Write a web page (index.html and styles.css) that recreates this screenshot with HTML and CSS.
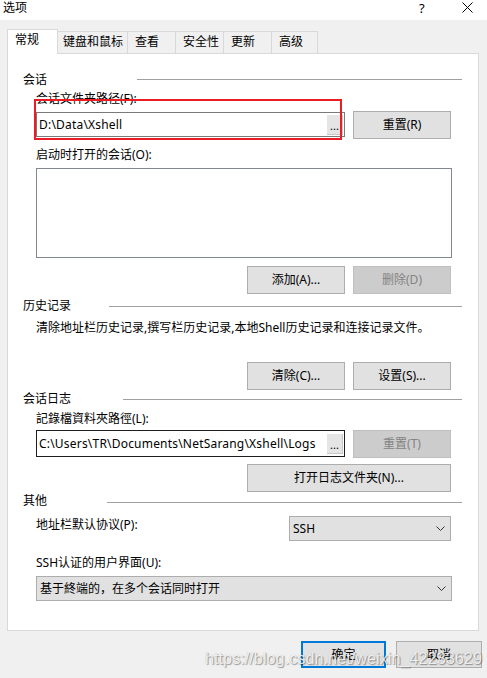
FILE: index.html
```html
<!DOCTYPE html>
<html lang="zh-CN">
<head>
<meta charset="utf-8">
<title>选项</title>
<link rel="stylesheet" href="styles.css">
</head>
<body>
<div class="window">
  <div class="titlebar">
    <span class="title">选项</span>
    <span class="help">?</span>
    <span class="close"><svg width="11" height="11" viewBox="0 0 11 11"><path d="M0.5 0.5 L10.5 10.5 M10.5 0.5 L0.5 10.5" stroke="#000" stroke-width="1" fill="none"/></svg></span>
  </div>
  <div class="dialog">
    <div class="tabs">
      <div class="tab tab-sel tab-general">常规</div>
      <div class="tab tab-keys">键盘和鼠标</div>
      <div class="tab tab-view">查看</div>
      <div class="tab tab-sec">安全性</div>
      <div class="tab tab-upd">更新</div>
      <div class="tab tab-adv">高级</div>
    </div>
    <div class="panel">
      <div class="sec-head head-session"><span>会话</span><i class="rule"></i></div>
      <div class="label lbl-path">会话文件夹路径(F):</div>
      <div class="row row-path">
        <div class="input input-path"><span class="val">D:\Data\Xshell</span><span class="browse">...</span></div>
        <button class="btn">重置(R)</button>
      </div>
      <div class="label lbl-start">启动时打开的会话(O):</div>
      <div class="listbox"></div>
      <div class="row row-btns row-add">
        <button class="btn">添加(A)...</button>
        <button class="btn disabled">删除(D)</button>
      </div>
      <div class="sec-head head-history"><span>历史记录</span><i class="rule"></i></div>
      <div class="label desc">清除地址栏历史记录,撰写栏历史记录,本地Shell历史记录和连接记录文件。</div>
      <div class="row row-btns row-clear">
        <button class="btn">清除(C)...</button>
        <button class="btn">设置(S)...</button>
      </div>
      <div class="sec-head head-log"><span>会话日志</span><i class="rule"></i></div>
      <div class="label lbl-log">記錄檔資料夾路徑(L):</div>
      <div class="row row-log">
        <div class="input input-log"><span class="val">C:\Users\TR\Documents\NetSarang\Xshell\Logs</span><span class="browse">...</span></div>
        <button class="btn disabled">重置(T)</button>
      </div>
      <div class="row row-btns row-open">
        <button class="btn btn-wide">打开日志文件夹(N)...</button>
      </div>
      <div class="sec-head head-other"><span>其他</span><i class="rule"></i></div>
      <div class="row row-proto">
        <div class="label">地址栏默认协议(P):</div>
        <div class="combo combo-proto"><span>SSH</span><svg width="9" height="5" viewBox="0 0 9 5"><path d="M0.5 0.5 L4.5 4.5 L8.5 0.5" stroke="#333" stroke-width="1" fill="none"/></svg></div>
      </div>
      <div class="label lbl-ui">SSH认证的用户界面(U):</div>
      <div class="combo combo-ui"><span>基于終端的，在多个会话同时打开</span><svg width="9" height="5" viewBox="0 0 9 5"><path d="M0.5 0.5 L4.5 4.5 L8.5 0.5" stroke="#333" stroke-width="1" fill="none"/></svg></div>
    </div>
    <div class="footer">
      <button class="btn btn-default">确定</button>
      <button class="btn btn-cancel">取消</button>
    </div>
  </div>
  <div class="annot"></div>
  <div class="watermark">https://blog.csdn.net/weixin_42233629</div>
</div>
</body>
</html>
```
FILE: styles.css
```css
* { box-sizing: border-box; }
html, body { margin: 0; padding: 0; }
body {
  width: 487px;
  height: 678px;
  background: #f0f0f0;
  font-family: "Noto Sans", "Noto Sans CJK SC", sans-serif;
  font-size: 12px;
  color: #000;
  overflow: hidden;
}
.window { position: relative; width: 487px; height: 678px; }
.titlebar {
  height: 20px;
  background: #fff;
  display: flex;
  align-items: flex-start;
  position: relative;
}
.title { margin-left: 3px; line-height: 15px; }
.help { position: absolute; left: 419px; top: 0; line-height: 16px; font-size: 13px; }
.close { position: absolute; left: 462px; top: 2px; width: 11px; height: 11px; }
.close svg { display: block; }

.dialog { padding: 9px 8px 0 7px; }
.tabs { display: flex; align-items: flex-end; height: 24px; }
.tab {
  height: 22px;
  border: 1px solid #d9d9d9;
  border-bottom: none;
  background: #f0f0f0;
  padding: 2px 0 0 6px;
  line-height: 16px;
  margin-left: -1px;
  white-space: nowrap;
}
.tab-sel {
  height: 25px;
  background: #fff;
  margin-left: 0;
  margin-bottom: -1px;
  position: relative;
  z-index: 1;
  padding-left: 7px;
}
.tab-general { width: 51px; }
.tab-keys { width: 71px; padding-left: 5px; }
.tab-view { width: 49px; padding-left: 7px; }
.tab-sec { width: 49px; padding-left: 7px; }
.tab-upd { width: 49px; padding-left: 7px; }
.tab-adv { width: 47px; padding-left: 7px; }

.panel {
  height: 578px;
  background: #fff;
  border: 1px solid #d9d9d9;
  padding: 0 16px 0 15px;
  display: flex;
  flex-direction: column;
}
.sec-head { display: flex; align-items: center; height: 16px; line-height: 16px; }
.sec-head .rule { flex: 1; height: 1px; background: #a0a0a0; }
.head-session { margin-top: 18px; }
.head-session .rule { margin-left: 90px; margin-top: -2px; }
.head-history { margin-top: 4px; }
.head-history .rule { margin-left: 38px; }
.head-log { margin-top: 1px; }
.head-log .rule { margin-left: 52px; }
.head-other { margin-top: 1px; }
.head-other .rule { margin-left: 60px; margin-top: 2px; }

.label { line-height: 16px; margin-left: 13px; white-space: nowrap; }
.lbl-path { margin-top: 3px; }
.lbl-start { margin-top: 8px; }
.desc { margin-top: 6px; }
.lbl-log { margin-top: 4px; }
.lbl-ui { margin-top: 14px; }

.row { display: flex; margin-left: 13px; margin-right: 11px; gap: 8px; }
.row-path { margin-top: 4px; }
.row-btns { justify-content: flex-end; }
.row-add { margin-top: 8px; }
.row-clear { margin-top: 26px; }
.row-log { margin-top: 3px; }
.row-open { margin-top: 6px; }
.row-proto { margin-top: 7px; margin-left: 0; justify-content: space-between; }
.row-proto .label { margin-top: 1px; }

.btn {
  font: inherit;
  color: #000;
  height: 28px;
  width: 98px;
  background: #e1e1e1;
  border: 1px solid #adadad;
  padding: 0;
  margin: 0;
  line-height: 16px;
  text-align: center;
}
.btn.disabled { background: #cccccc; border-color: #bfbfbf; color: #838383; }
.btn-wide { width: 204px; }

.input {
  flex: none;
  width: 309px;
  background: #fff;
  border: 1px solid #7a7a7a;
  display: flex;
  align-items: center;
  padding-left: 2px;
}
.input .val { flex: 1; white-space: nowrap; overflow: hidden; line-height: 16px; letter-spacing: 0.2px; }
.input .browse {
  width: 16px;
  height: 20px;
  margin-right: 1px;
  background: #e5e5e5;
  border-right: 1px solid #c8c8c8;
  border-bottom: 1px solid #c8c8c8;
  font-size: 11px;
  line-height: 22px;
  text-align: center;
  letter-spacing: 0;
}
.input-path { height: 25px; margin-top: 1px; }
.input-log { height: 27px; border-color: #1e1e1e; }

.listbox {
  margin: 5px 10px 0 13px;
  height: 90px;
  border: 1px solid #828790;
  background: #fff;
}

.combo {
  height: 25px;
  background: #e1e1e1;
  border: 1px solid #adadad;
  display: flex;
  align-items: center;
  justify-content: space-between;
  padding: 0 5px 0 3px;
  line-height: 16px;
}
.combo svg { display: block; }
.combo-proto { width: 162px; }
.combo-ui { margin: 5px 10px 0 13px; padding-left: 3px; }

.footer {
  display: flex;
  justify-content: flex-end;
  gap: 10px;
  margin-top: 10px;
  margin-right: -3px;
}
.footer .btn { height: 27px; }
.btn-default { width: 85px; border: 2px solid #0078d7; }
.btn-cancel { width: 86px; }

.annot {
  position: absolute;
  left: 34px;
  top: 99px;
  width: 308px;
  height: 41px;
  border: 2px solid #ec1c24;
  pointer-events: none;
}
.watermark {
  position: absolute;
  left: 205px;
  top: 648px;
  font-family: "Liberation Sans", Arial, sans-serif;
  font-size: 16.3px;
  line-height: 20px;
  color: rgba(255, 255, 255, 0.85);
  text-shadow: 1px 1px 1px rgba(0, 0, 0, 0.35), 0 0 1px rgba(0, 0, 0, 0.25);
  white-space: nowrap;
  pointer-events: none;
}
```
